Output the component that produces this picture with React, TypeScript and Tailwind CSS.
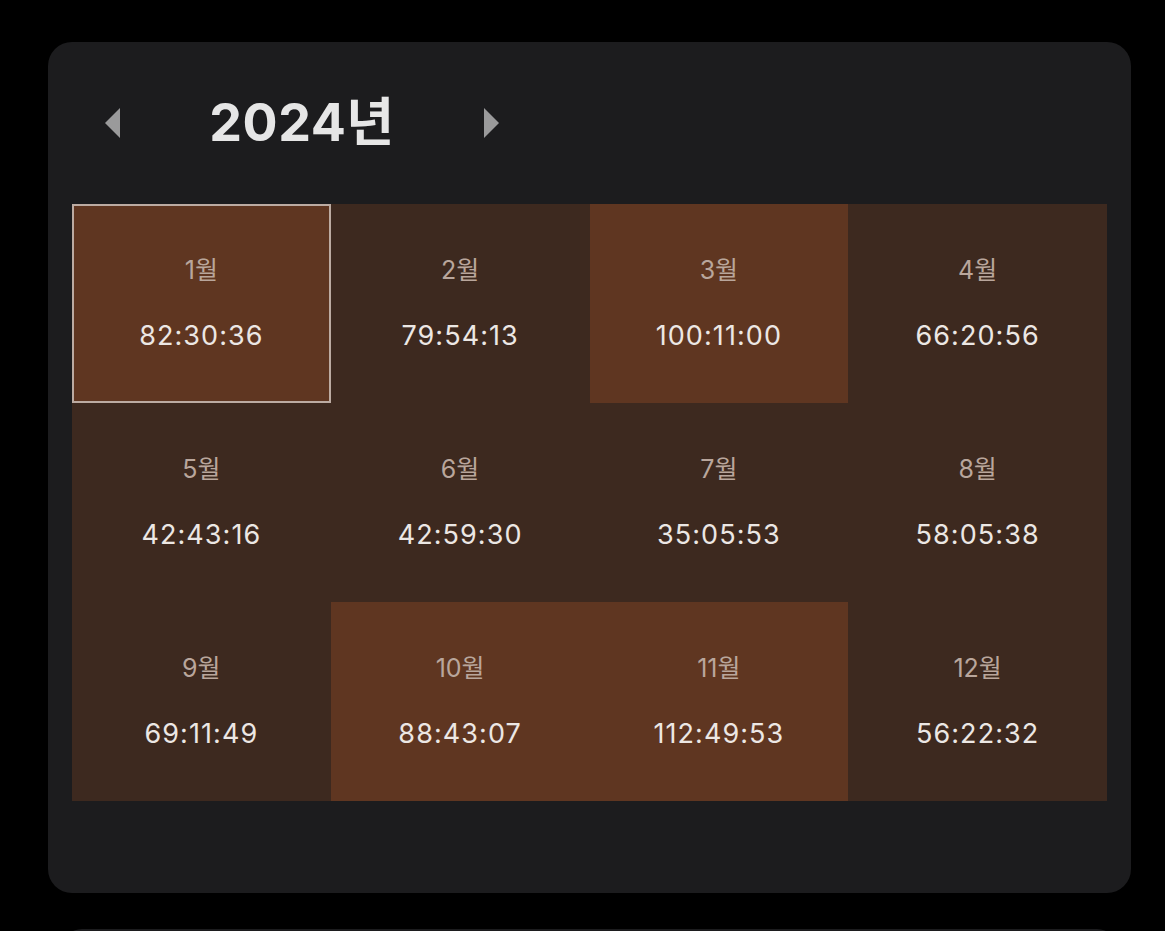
const months = [
  { m: '1월', t: '82:30:36', hot: true, selected: true },
  { m: '2월', t: '79:54:13' },
  { m: '3월', t: '100:11:00', hot: true },
  { m: '4월', t: '66:20:56' },
  { m: '5월', t: '42:43:16' },
  { m: '6월', t: '42:59:30' },
  { m: '7월', t: '35:05:53' },
  { m: '8월', t: '58:05:38' },
  { m: '9월', t: '69:11:49' },
  { m: '10월', t: '88:43:07', hot: true },
  { m: '11월', t: '112:49:53', hot: true },
  { m: '12월', t: '56:22:32' },
]

function MonthCell({ m, t, hot, selected }: { m: string; t: string; hot?: boolean; selected?: boolean }) {
  return (
    <div
      className={
        'h-[199px] flex flex-col items-center justify-center gap-[39px] ' +
        (hot ? 'bg-[#5f3621] ' : 'bg-[#3d291f] ') +
        (selected ? 'border-2 border-[#bcaba2]' : '')
      }
    >
      <span className="text-[25px] leading-none text-[#b9a69c]">{m}</span>
      <span className="text-[27px] leading-none tracking-[0.04em] text-[#ece7e4]">{t}</span>
    </div>
  )
}

export default function App() {
  return (
    <div
      className="h-[931px] bg-black pt-[42px] overflow-hidden"
      style={{ fontFamily: 'Inter, "Noto Sans CJK KR", sans-serif' }}
    >
      <div className="ml-[48px] mr-[34px] h-[851px] rounded-[24px] bg-[#1c1c1e] px-[24px] pt-[56px]">
        <div className="h-[50px] flex items-center">
          <div className="ml-[33px] w-0 h-0 border-y-[15px] border-y-transparent border-r-[15px] border-r-[#9a9a9b]" />
          <div className="w-[364px] text-center text-[52px] font-bold leading-none text-[#e6e6e6] tracking-[0.01em]">
            2024년
          </div>
          <div className="w-0 h-0 border-y-[15px] border-y-transparent border-l-[15px] border-l-[#9a9a9b]" />
        </div>
        <div className="mt-[56px] grid grid-cols-4">
          {months.map((x) => (
            <MonthCell key={x.m} {...x} />
          ))}
        </div>
      </div>
      <div className="ml-[62px] mr-[48px] mt-[36px] h-[20px] rounded-t-[24px] bg-[#1c1c1e]" />
    </div>
  )
}
